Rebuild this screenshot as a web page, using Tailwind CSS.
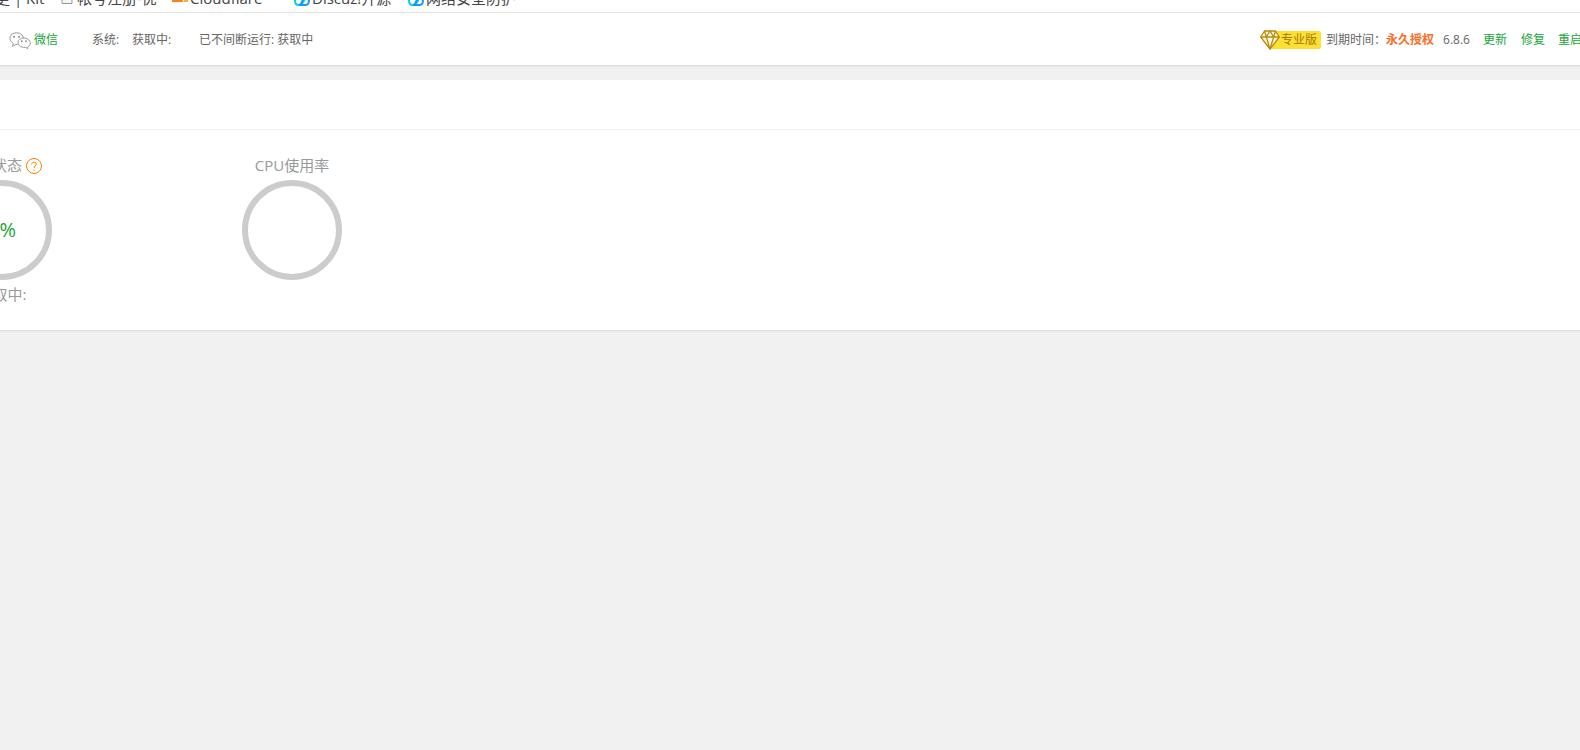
<!DOCTYPE html>
<html lang="zh-CN">
<head>
<meta charset="utf-8">
<title>面板首页</title>
<script src="https://cdn.jsdelivr.net/npm/@tailwindcss/browser@4"></script>
</head>
<body class="min-h-screen overflow-x-hidden bg-[#f1f1f1] font-['Open_Sans','Noto_Sans_CJK_SC',sans-serif] text-xs text-[#666]">
<nav aria-label="书签" class="flex h-[13px] items-end overflow-hidden border-b border-[#e2e2e2] bg-white pb-1 text-[15px] leading-5 text-[#444]">
  <a href="#" class="-ml-[5px] w-[66px] shrink-0 whitespace-pre">更 | Kit</a>
  <a href="#" class="flex w-[111px] shrink-0 items-end gap-1 whitespace-nowrap">
    <svg class="mb-1 size-3 shrink-0" viewBox="0 0 12 12" fill="#f5f5f5" stroke="#999"><path d="M1 .5h10v11H1z"/></svg>帐号注册-优</a>
  <a href="#" class="flex w-[122px] shrink-0 items-center gap-[2px] whitespace-nowrap">
    <svg class="h-4 w-4 shrink-0" viewBox="0 0 16 16"><path fill="#f6821f" d="M0 11c0-2 1-3 2-3 0-4 6-6 8-1l1 5H0z"/><path fill="#fbad41" d="M11.500 12l1-5c2 0 3.500 2 3.500 5z"/></svg>Cloudflare</a>
  <a href="#" class="flex w-[114px] shrink-0 items-center gap-[2px] whitespace-nowrap">
    <svg class="mt-1 size-4 shrink-0" viewBox="0 0 16 16" fill="none" stroke-width="2"><path stroke="#00d0f0" d="M9 6c-2-3-8-2-8 3 0 3 2 4 4 4 4 0 5-7 8-7"/><path stroke="#1296ff" d="M5 13h6c5 0 5-7 1-7-3 0-4 4-5 6"/></svg>Discuz!开源</a>
  <a href="#" class="flex shrink-0 items-center gap-[2px] whitespace-nowrap">
    <svg class="mt-1 size-4 shrink-0" viewBox="0 0 16 16" fill="none" stroke-width="2"><path stroke="#00d0f0" d="M9 6c-2-3-8-2-8 3 0 3 2 4 4 4 4 0 5-7 8-7"/><path stroke="#1296ff" d="M5 13h6c5 0 5-7 1-7-3 0-4 4-5 6"/></svg>网络安全防护</a>
</nav>
<header class="flex h-[53px] items-center justify-between overflow-hidden border-b border-[#ddd] bg-white pt-[2px] shadow-xs">
  <div class="flex items-center whitespace-nowrap pl-[9px]">
    <a href="#" class="flex w-[83px] items-center gap-[3px] text-[#20a53a]">
      <svg class="h-[17px] w-[22px]" viewBox="0 0 22 17" fill="none" stroke="#999"><path d="M7 12.500l-3.500 1.800.8-2.800C-1.500 8 .5.800 7.500.8c4 0 6.500 2.200 7 5.200M8.500 12.500H7"/><path d="M18.500 15.200c6-3.500 1.500-9.200-3.500-9.200-8 0-8.500 9.500 1.500 9.500l2.500 1z"/><g fill="#888" stroke="none"><circle cx="5" cy="4.800" r="1"/><circle cx="10" cy="4.800" r="1"/><circle cx="12.800" cy="9.200" r=".9"/><circle cx="17" cy="9.200" r=".9"/></g></svg>微信</a>
    <span class="w-10">系统:</span>
    <span class="w-[67px]">获取中:</span>
    <span>已不间断运行: 获取中</span>
  </div>
  <div class="-mr-[2px] flex items-center whitespace-nowrap">
    <span class="mr-[5px] flex items-center text-[#a8760c]">
      <svg class="z-10 -mr-[10px] h-5 w-5" viewBox="0 0 20 20" fill="#fff8dc" stroke="#b88b12" stroke-width="1.300" stroke-linejoin="round"><path d="M4.500 1h11L19.300 7 10 19 .7 7z"/><path fill="none" d="M.7 7h18.600M4.500 1l1.800 6L10 19l3.700-12 1.800-6M6.300 7L10 1l3.700 6"/></svg>
      <span class="h-[18px] rounded-[2px] bg-[#fbe133] pl-[11px] pr-1 leading-[18px]">专业版</span>
    </span>
    <span class="w-[60px]">到期时间：</span>
    <strong class="mr-[9px] text-[#fc6d26]">永久授权</strong>
    <span class="mr-[13px]">6.8.6</span>
    <a href="#" class="mr-[14px] text-[#20a53a]">更新</a>
    <a href="#" class="mr-[13px] text-[#20a53a]">修复</a>
    <a href="#" class="text-[#20a53a]">重启</a>
  </div>
</header>
<main class="mt-[14px] overflow-hidden border-b border-[#ddd] bg-white pb-6 shadow-xs">
  <div class="h-[50px] border-b border-[#eee]"></div>
  <ul class="-ml-[143px] flex pt-[23px] text-center text-[15px] leading-6 text-[#999]">
    <li class="flex w-[290px] flex-col items-center">
      <h3 class="flex items-center gap-1">负载状态<button type="button" aria-label="负载说明" class="mt-[2px]"><svg class="size-4" viewBox="0 0 16 16" fill="none" stroke="#ff7f00"><circle cx="8" cy="8" r="7.500"/><path d="M5.700 6.500c0-3 4.600-3 4.600-.3C10.300 8 8 7.800 8 10.200M8 11.600v1.200"/></svg></button></h3>
      <div class="mt-[3px] flex size-[100px] items-center justify-center rounded-full border-6 border-[#ccc] text-xl text-[#20a53a]">0%</div>
      <p class="mt-[2px]">获取中:</p>
    </li>
    <li class="flex w-[290px] flex-col items-center">
      <h3>CPU使用率</h3>
      <div class="mt-[3px] size-[100px] rounded-full border-6 border-[#ccc]"></div>
    </li>
  </ul>
</main>
</body>
</html>
